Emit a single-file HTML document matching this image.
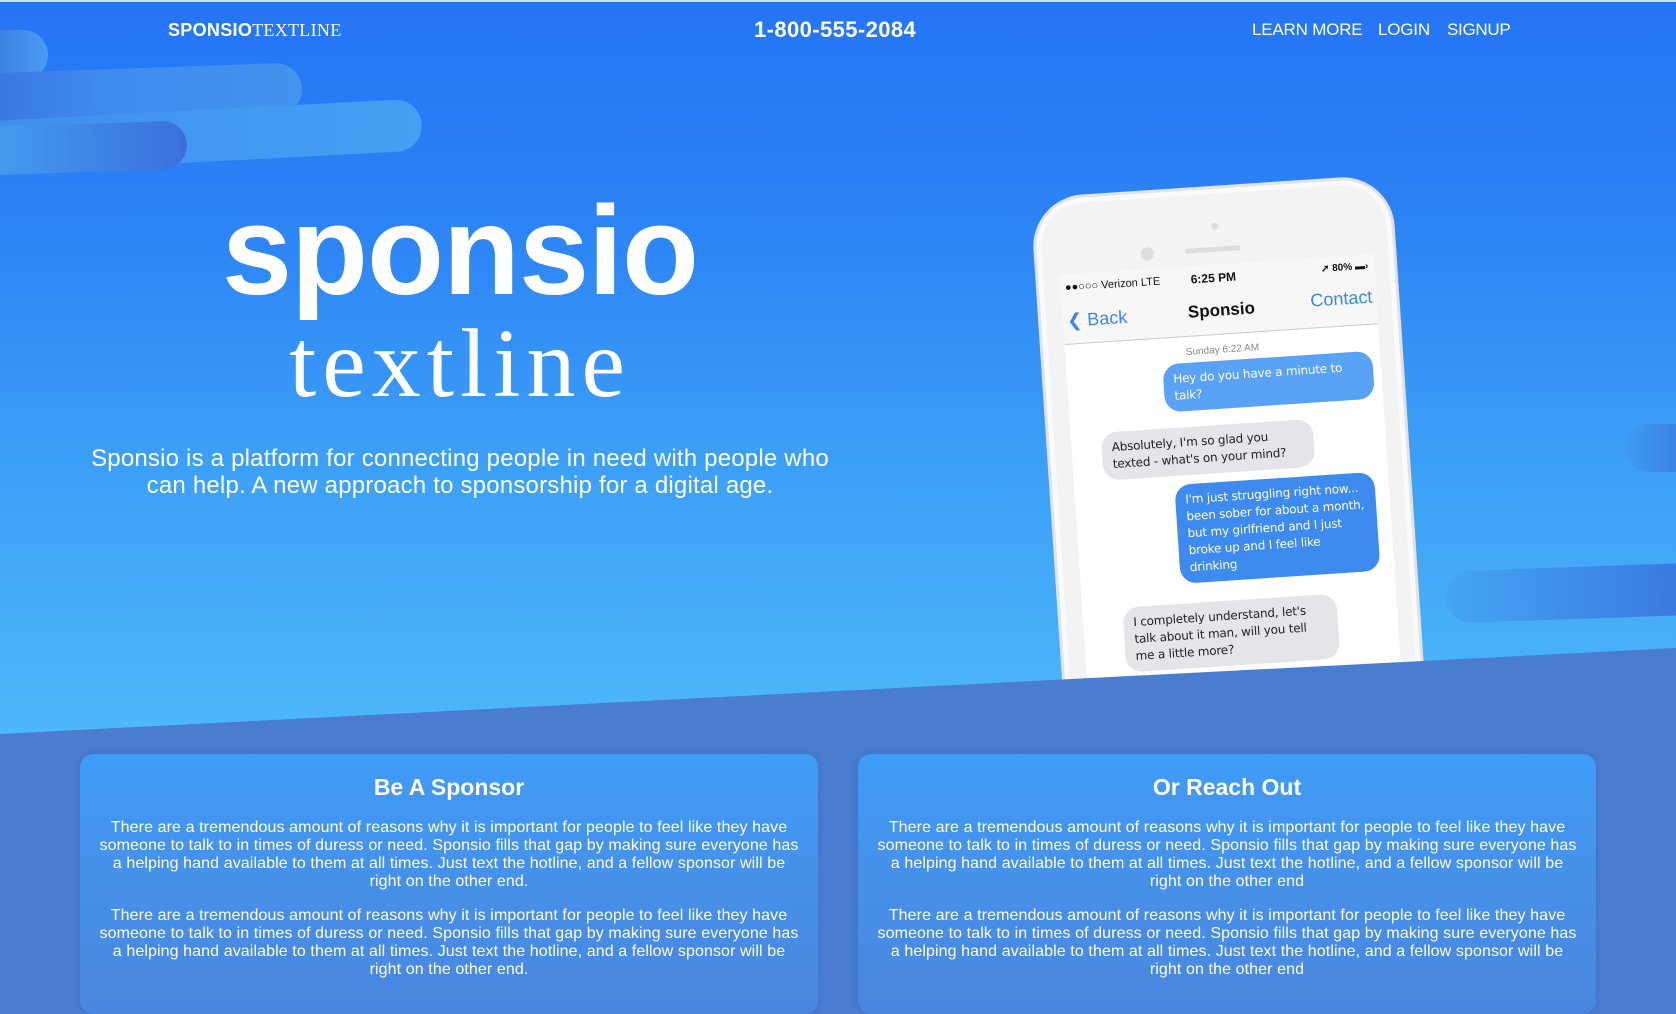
<!DOCTYPE html>
<html><head><meta charset="utf-8"><style>
*{margin:0;padding:0;box-sizing:border-box}
body{width:1676px;height:955px;overflow:hidden;font-family:"Liberation Sans",sans-serif;color:#fff;position:relative;background:#4a7ccf}
.hero{position:absolute;left:0;top:0;width:1676px;height:760px;background:linear-gradient(180deg,#2574f5 0%,#2d84f5 30%,#3c9ff7 60%,#4fbafb 100%);border-top:2px solid #cfe0ff}
.pill{position:absolute;border-radius:30px}
.nav{position:absolute;top:18px;font-size:17px;letter-spacing:.3px}
.phone{position:absolute;left:1030px;top:196px;width:362px;height:580px;transform:rotate(-3.8deg);transform-origin:0 0;background:#f3f3f3;border:3px solid #e2e2e2;border-radius:52px;box-shadow:inset 0 0 0 5px #fafafa}
.screen{position:absolute;left:22px;right:20px;top:76px;bottom:0;background:#fff;color:#111}
.b{position:absolute;font-family:"DejaVu Sans",sans-serif;font-size:12px;line-height:17px;padding:7px 10px;border-radius:16px;letter-spacing:-.2px}
.bl{background:#5aa2f5;color:#fff}
.bd{background:#3d8bef;color:#fff}
.g{background:#e4e4e9;color:#222}
.dark{position:absolute;left:0;top:0;width:1676px;height:955px;background:#4a7ccf;clip-path:polygon(0 734px,1676px 648px,1676px 955px,0 955px)}
.card{position:absolute;top:754px;width:738px;height:260px;border-radius:13px;background:linear-gradient(180deg,#3f9cf6 0%,#4790e8 50%,#4a86df 100%);text-align:center;box-shadow:0 0 6px rgba(40,80,170,.3)}
.card h2{font-weight:bold;font-size:23px;margin-top:20px;letter-spacing:0}
.card p{font-size:16px;line-height:18px;margin:18px 0 0;letter-spacing:.1px;white-space:nowrap}
.card p+p{margin-top:16px}
</style></head><body>
<div class="hero">
  <div class="pill" style="left:-20px;top:28px;width:68px;height:50px;background:linear-gradient(90deg,#3a74dd,#4a9cf0)"></div>
  <div class="pill" style="left:-20px;top:66px;width:322px;height:52px;transform:rotate(-2deg);background:linear-gradient(90deg,#3a74dd,#3e8cf0 40%,#4294ee)"></div>
  <div class="pill" style="left:-20px;top:108px;width:442px;height:52px;transform:rotate(-3deg);background:linear-gradient(90deg,#3f8ff0,#44a0f2)"></div>
  <div class="pill" style="left:-20px;top:122px;width:207px;height:48px;transform:rotate(-2deg);background:linear-gradient(90deg,#43a0f0,#3b6fdc)"></div>
  <div class="pill" style="left:1625px;top:422px;width:80px;height:48px;background:linear-gradient(90deg,#3e9cf2,#3a74dd)"></div>
  <div class="pill" style="left:1445px;top:565px;width:260px;height:52px;transform:rotate(-2deg);background:linear-gradient(90deg,#44a6f4,#3a74dd)"></div>

  <div class="nav" style="left:168px;font-size:18px;font-weight:bold">SPONSIO<span style="font-family:'Liberation Serif',serif;font-weight:normal">TEXTLINE</span></div>
  <div class="nav" style="left:754px;font-size:22px;font-weight:bold;top:15px;letter-spacing:.4px">1-800-555-2084</div>
  <div class="nav" style="left:1252px;letter-spacing:-.2px">LEARN MORE</div>
  <div class="nav" style="left:1378px;letter-spacing:-.2px">LOGIN</div>
  <div class="nav" style="left:1447px;letter-spacing:-.3px">SIGNUP</div>

  <div style="position:absolute;left:200px;top:176px;width:520px;text-align:center;font-size:126px;font-weight:bold;letter-spacing:-1px">sponsio</div>
  <div style="position:absolute;left:200px;top:306px;width:520px;text-align:center;font-family:'Liberation Serif',serif;font-size:98px;letter-spacing:6px">textline</div>
  <div style="position:absolute;left:30px;top:443px;width:860px;text-align:center;font-size:24px;line-height:27px;letter-spacing:.2px">Sponsio is a platform for connecting people in need with people who<br>can help. A new approach to sponsorship for a digital age.</div>

  <div class="phone">
    <div style="position:absolute;left:176px;top:34px;width:7px;height:7px;border-radius:50%;background:#ddd"></div>
    <div style="position:absolute;left:148px;top:58px;width:56px;height:5px;border-radius:3px;background:#ddd"></div>
    <div style="position:absolute;left:104px;top:54px;width:13px;height:13px;border-radius:50%;background:#ddd"></div>
    <div class="screen">
      <div style="position:absolute;left:0;right:0;top:0;height:70px;background:#f7f7f7;border-bottom:1px solid #ccc"></div>
      <div style="position:absolute;left:4px;top:7px;font-size:11px">●●○○○ Verizon LTE</div>
      <div style="position:absolute;left:130px;top:6px;font-size:12px;font-weight:bold">6:25 PM</div>
      <div style="position:absolute;right:6px;top:6px;font-size:10px;font-weight:bold">➚ 80% ▬›</div>
      <div style="position:absolute;left:4px;top:36px;font-size:18px;color:#3a86f0">❮ Back</div>
      <div style="position:absolute;left:125px;top:36px;font-size:17px;font-weight:bold">Sponsio</div>
      <div style="position:absolute;right:4px;top:32px;font-size:18px;color:#3a86f0">Contact</div>
      <div style="position:absolute;left:0;right:0;top:80px;text-align:center;font-size:10px;color:#888">Sunday 6:22 AM</div>
      <div class="b bl" style="left:96px;top:96px;width:210px">Hey do you have a minute to talk?</div>
      <div class="b g" style="left:30px;top:160px;width:212px">Absolutely, I'm so glad you texted - what's on your mind?</div>
      <div class="b bd" style="left:100px;top:217px;width:200px">I'm just struggling right now... been sober for about a month, but my girlfriend and I just broke up and I feel like drinking</div>
      <div class="b g" style="left:40px;top:336px;width:214px">I completely understand, let's talk about it man, will you tell me a little more?</div>
    </div>
  </div>
</div>
<div class="dark"></div>
<div class="card" style="left:80px">
  <h2>Be A Sponsor</h2>
  <p>There are a tremendous amount of reasons why it is important for people to feel like they have<br>someone to talk to in times of duress or need. Sponsio fills that gap by making sure everyone has<br>a helping hand available to them at all times. Just text the hotline, and a fellow sponsor will be<br>right on the other end.</p>
  <p>There are a tremendous amount of reasons why it is important for people to feel like they have<br>someone to talk to in times of duress or need. Sponsio fills that gap by making sure everyone has<br>a helping hand available to them at all times. Just text the hotline, and a fellow sponsor will be<br>right on the other end.</p>
</div>
<div class="card" style="left:858px">
  <h2>Or Reach Out</h2>
  <p>There are a tremendous amount of reasons why it is important for people to feel like they have<br>someone to talk to in times of duress or need. Sponsio fills that gap by making sure everyone has<br>a helping hand available to them at all times. Just text the hotline, and a fellow sponsor will be<br>right on the other end</p>
  <p>There are a tremendous amount of reasons why it is important for people to feel like they have<br>someone to talk to in times of duress or need. Sponsio fills that gap by making sure everyone has<br>a helping hand available to them at all times. Just text the hotline, and a fellow sponsor will be<br>right on the other end</p>
</div>
</body></html>
